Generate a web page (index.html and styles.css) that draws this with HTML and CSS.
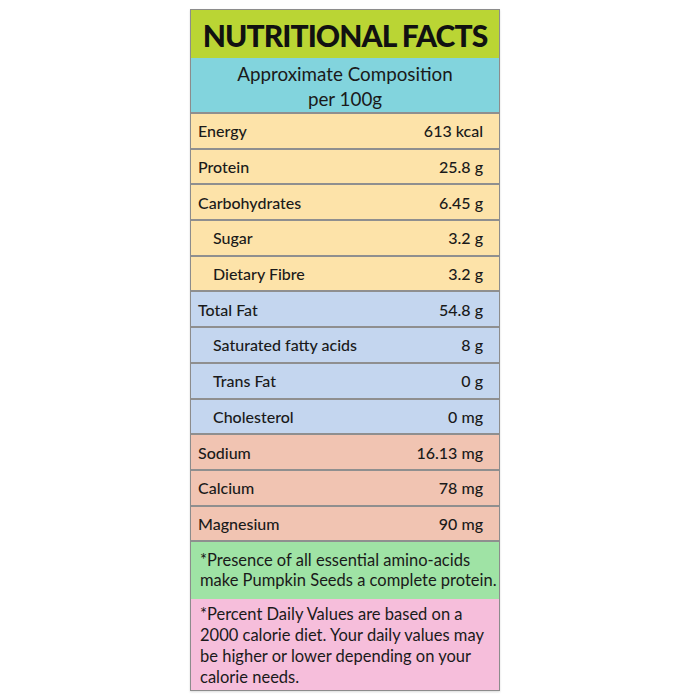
FILE: index.html
```html
<!DOCTYPE html>
<html>
<head>
<meta charset="utf-8">
<link rel="stylesheet" href="styles.css">
</head>
<body>
<div class="page">
  <div class="card">
    <div class="title">NUTRITIONAL FACTS</div>
    <div class="sub">Approximate Composition<br>per 100g</div>
    <div class="row yellow"><span>Energy</span><span>613 kcal</span></div>
    <div class="row yellow"><span>Protein</span><span>25.8 g</span></div>
    <div class="row yellow"><span>Carbohydrates</span><span>6.45 g</span></div>
    <div class="row yellow indent"><span>Sugar</span><span>3.2 g</span></div>
    <div class="row yellow indent"><span>Dietary Fibre</span><span>3.2 g</span></div>
    <div class="row blue"><span>Total Fat</span><span>54.8 g</span></div>
    <div class="row blue indent"><span>Saturated fatty acids</span><span>8 g</span></div>
    <div class="row blue indent"><span>Trans Fat</span><span>0 g</span></div>
    <div class="row blue indent"><span>Cholesterol</span><span>0 mg</span></div>
    <div class="row salmon"><span>Sodium</span><span>16.13 mg</span></div>
    <div class="row salmon"><span>Calcium</span><span>78 mg</span></div>
    <div class="row salmon"><span>Magnesium</span><span>90 mg</span></div>
    <div class="note green">*Presence of all essential amino-acids<br>make Pumpkin Seeds a complete protein.</div>
    <div class="note pink">*Percent Daily Values are based on a 2000 calorie diet. Your daily values may be higher or lower depending on your calorie needs.</div>
  </div>
</div>
</body>
</html>
```

FILE: styles.css
```css
* { box-sizing: border-box; }
html, body { margin: 0; padding: 0; background: #ffffff; }
body { font-family: "Lato", "Liberation Sans", sans-serif; color: #1a1a1a; }
.page {
  width: 690px;
  height: 700px;
  display: flex;
  justify-content: center;
  padding-top: 9px;
}
.card {
  width: 310px;
  height: 682px;
  border: 1px solid #8c8c8c;
  display: flex;
  flex-direction: column;
  box-shadow: 0 1px 2px rgba(0,0,0,0.15);
}
.title {
  height: 48px;
  background: #bad534;
  font-weight: 900;
  font-size: 30px;
  letter-spacing: -0.9px;
  color: #111;
  display: flex;
  align-items: center;
  justify-content: center;
  padding-top: 2px;
}
.sub {
  height: 56px;
  background: #82d4dd;
  text-align: center;
  font-size: 18.8px;
  line-height: 25px;
  padding-top: 3px;
  border-bottom: 2px solid #8f8f8f;
}
.row {
  height: 35.7px;
  display: flex;
  justify-content: space-between;
  align-items: center;
  padding: 0 16px 0 7px;
  font-size: 16px;
  font-weight: 500;
  border-bottom: 2px solid #8f8f8f;
}
.row.indent { padding-left: 22px; }
.yellow { background: #fde3a9; }
.blue { background: #c4d6ef; }
.salmon { background: #f1c4b2; }
.note {
  padding: 9px 0 0 9px;
  font-size: 16.5px;
  line-height: 20px;
}
.green {
  height: 57px;
  background: #9fe3a5;
  line-height: 19.5px;
  white-space: nowrap;
}
.pink {
  flex: 1;
  background: #f6bedb;
  line-height: 21px;
  padding-top: 5px;
  padding-right: 14px;
}
```
